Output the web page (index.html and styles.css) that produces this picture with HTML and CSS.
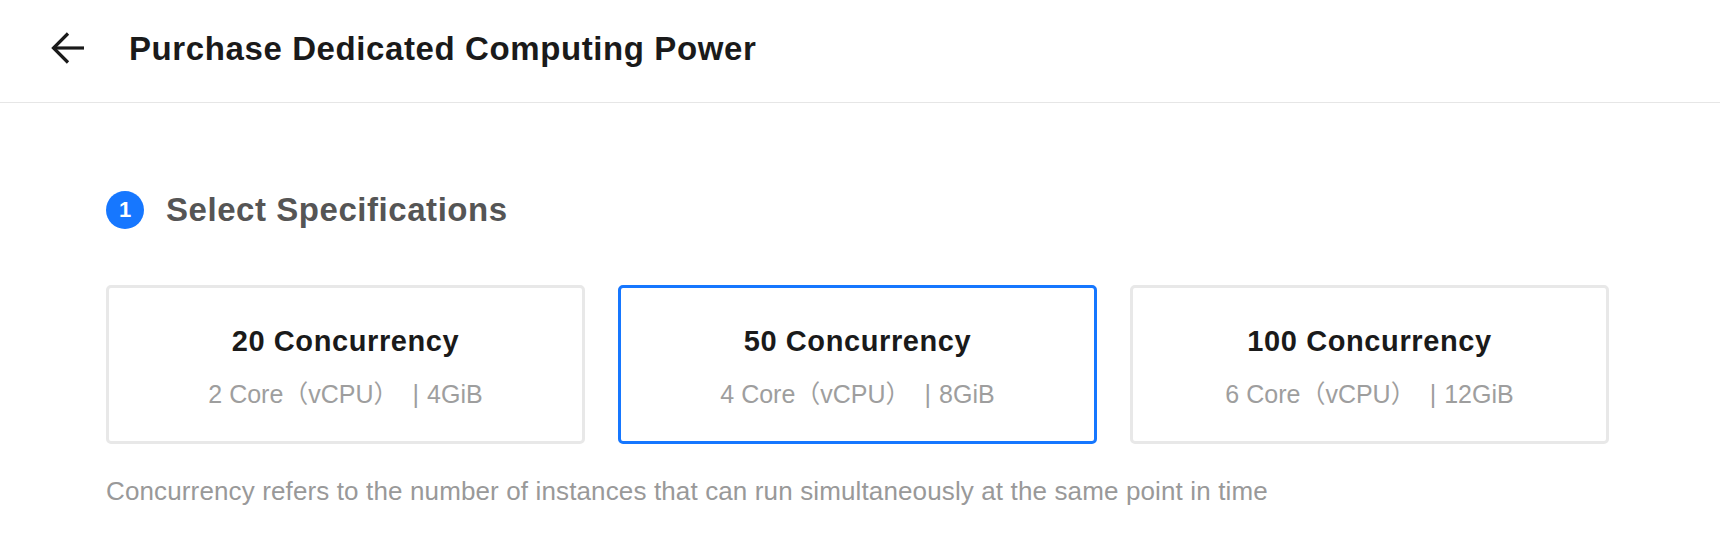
FILE: index.html
```html
<!DOCTYPE html>
<html lang="en">
<head>
<meta charset="utf-8">
<title>Purchase Dedicated Computing Power</title>
<link rel="stylesheet" href="styles.css">
</head>
<body>
<header class="header">
  <button class="back" aria-label="Back">
    <svg width="34" height="32" viewBox="0 0 34 32" fill="none" stroke="#1a1a1a" stroke-width="3.2" stroke-linejoin="miter">
      <path d="M2 16 H33"/>
      <path d="M17 1.5 L2.5 16 L17 30.5"/>
    </svg>
  </button>
  <h1 class="title">Purchase Dedicated Computing Power</h1>
</header>
<main class="main">
  <div class="step">
    <span class="step-num">1</span>
    <h2 class="step-title">Select Specifications</h2>
  </div>
  <div class="cards">
    <div class="card">
      <div class="card-title">20 Concurrency</div>
      <div class="card-sub">2 Core（vCPU）<span class="sep">|</span>4GiB</div>
    </div>
    <div class="card card-active">
      <div class="card-title">50 Concurrency</div>
      <div class="card-sub">4 Core（vCPU）<span class="sep">|</span>8GiB</div>
    </div>
    <div class="card">
      <div class="card-title">100 Concurrency</div>
      <div class="card-sub">6 Core（vCPU）<span class="sep">|</span>12GiB</div>
    </div>
  </div>
  <p class="note">Concurrency refers to the number of instances that can run simultaneously at the same point in time</p>
</main>
</body>
</html>
```

FILE: styles.css
```css
* { box-sizing: border-box; }
html, body {
  margin: 0;
  padding: 0;
  background: #fff;
  font-family: "Liberation Sans", Arial, "Noto Sans CJK SC", sans-serif;
}
.header {
  height: 103px;
  border-bottom: 1px solid #e6e6e6;
  display: flex;
  align-items: center;
  padding-left: 51px;
}
.back {
  border: 0;
  background: none;
  padding: 0;
  margin: 0;
  width: 34px;
  height: 32px;
  display: flex;
  margin-top: -7px;
}
.title {
  margin: -5px 0 0 44px;
  font-size: 33px;
  font-weight: 700;
  color: #1a1a1a;
  letter-spacing: 0.6px;
  line-height: 40px;
}
.main {
  padding: 88px 0 0 106px;
}
.step {
  display: flex;
  align-items: center;
  height: 38px;
}
.step-num {
  width: 38px;
  height: 38px;
  border-radius: 50%;
  background: #1677ff;
  color: #fff;
  font-weight: 700;
  font-size: 22px;
  display: flex;
  align-items: center;
  justify-content: center;
}
.step-title {
  margin: 0 0 0 22px;
  font-size: 33px;
  font-weight: 700;
  color: #555;
  line-height: 40px;
  letter-spacing: 0.55px;
}
.cards {
  margin-top: 56px;
  display: grid;
  grid-template-columns: repeat(3, 479px);
  column-gap: 33px;
}
.card {
  height: 159px;
  border: 3px solid #e8e8e8;
  border-radius: 5px;
  display: flex;
  flex-direction: column;
  align-items: center;
  padding-top: 37px;
}
.card-active {
  border-color: #1677ff;
}
.card-title {
  font-size: 29px;
  font-weight: 700;
  color: #1a1a1a;
  line-height: 32px;
  letter-spacing: 0.6px;
}
.card-sub {
  margin-top: 22px;
  font-size: 25px;
  line-height: 30px;
  color: #9e9e9e;
}
.sep {
  margin: 0 8px 0 14px;
  font-weight: 300;
}
.note {
  margin: 32px 0 0;
  font-size: 26px;
  line-height: 30px;
  letter-spacing: 0.13px;
  color: #999;
}
```
